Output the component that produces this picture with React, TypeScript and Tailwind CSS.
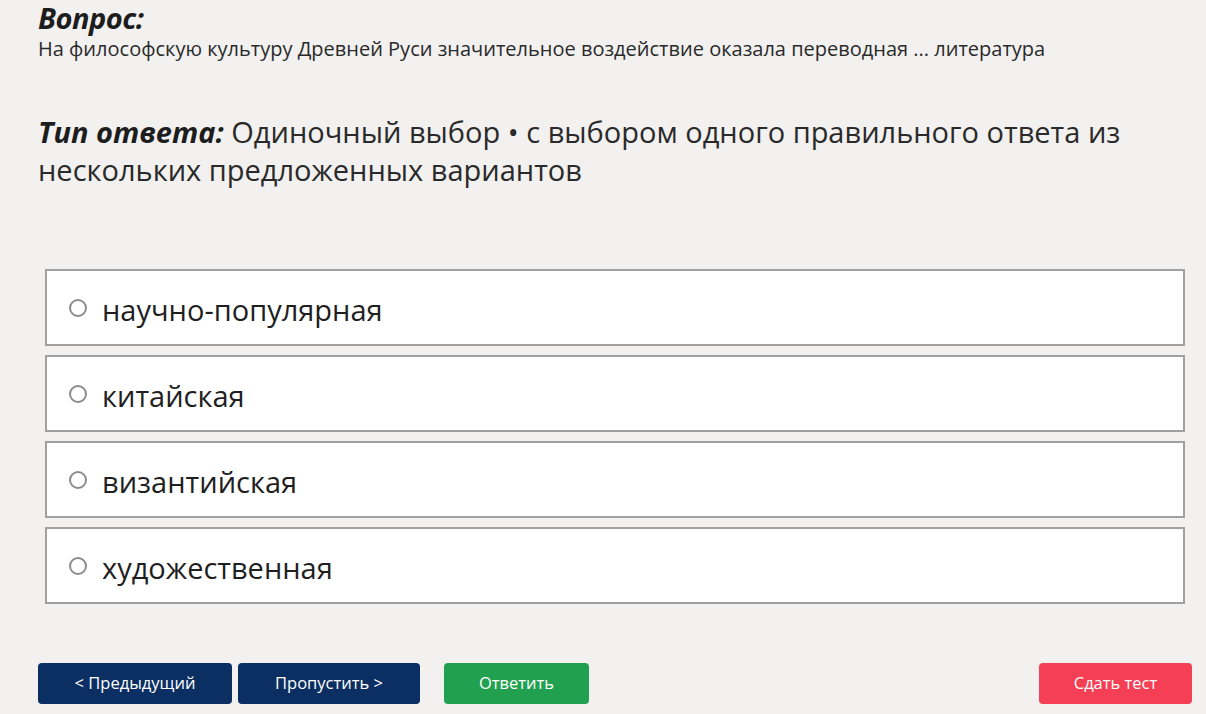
const OPTIONS = ["научно-популярная", "китайская", "византийская", "художественная"];

function Radio() {
  return <span className="h-[18px] w-[18px] shrink-0 rounded-full border-2 border-[#8c8c8c] bg-white" />;
}

export default function App() {
  return (
    <div
      className="min-h-[714px] w-full bg-[#f2f1ef] text-[#222] pl-[38px] pr-[14px]"
      style={{ fontFamily: '"Open Sans", "Noto Sans", sans-serif' }}
    >
      {/* Question */}
      <h2 className="pt-[2px] text-[29px] font-bold italic leading-[32px] tracking-[-0.5px] text-[#1d1d1d]">Вопрос:</h2>
      <p className="mt-[2px] text-[20px] leading-[26px] text-[#2a2a2a]">
        На философскую культуру Древней Руси значительное воздействие оказала переводная ... литература
      </p>

      {/* Answer type */}
      <p className="mt-[51px] max-w-[1120px] text-[29px] leading-[38px] text-[#2a2a2a]">
        <span className="font-bold italic text-[#1d1d1d]">Тип ответа:</span>{" "}Одиночный выбор • с
        выбором одного правильного ответа из нескольких предложенных вариантов
      </p>

      {/* Options */}
      <div className="mt-[80px] ml-[7px] mr-[7px] flex flex-col gap-[9px]">
        {OPTIONS.map((o) => (
          <label
            key={o}
            className="flex h-[77px] items-center gap-[15px] border-2 border-[#a0a0a0] bg-white pl-[22px]"
          >
            <Radio />
            <span className="pt-[3px] text-[29px] leading-none text-[#1f1f1f]">{o}</span>
          </label>
        ))}
      </div>

      {/* Buttons */}
      <div className="mt-[59px] flex items-center">
        <button className="h-[41px] w-[194px] rounded-[4px] bg-[#0b2f63] text-[16.5px] text-white">
          &lt; Предыдущий
        </button>
        <button className="ml-[6px] h-[41px] w-[182px] rounded-[4px] bg-[#0b2f63] text-[16.5px] text-white">
          Пропустить &gt;
        </button>
        <button className="ml-[24px] h-[41px] w-[145px] rounded-[4px] bg-[#21a04f] text-[16.5px] text-white">
          Ответить
        </button>
        <button className="ml-auto h-[41px] w-[153px] rounded-[4px] bg-[#f43f55] text-[16.5px] text-white">
          Сдать тест
        </button>
      </div>
    </div>
  );
}
